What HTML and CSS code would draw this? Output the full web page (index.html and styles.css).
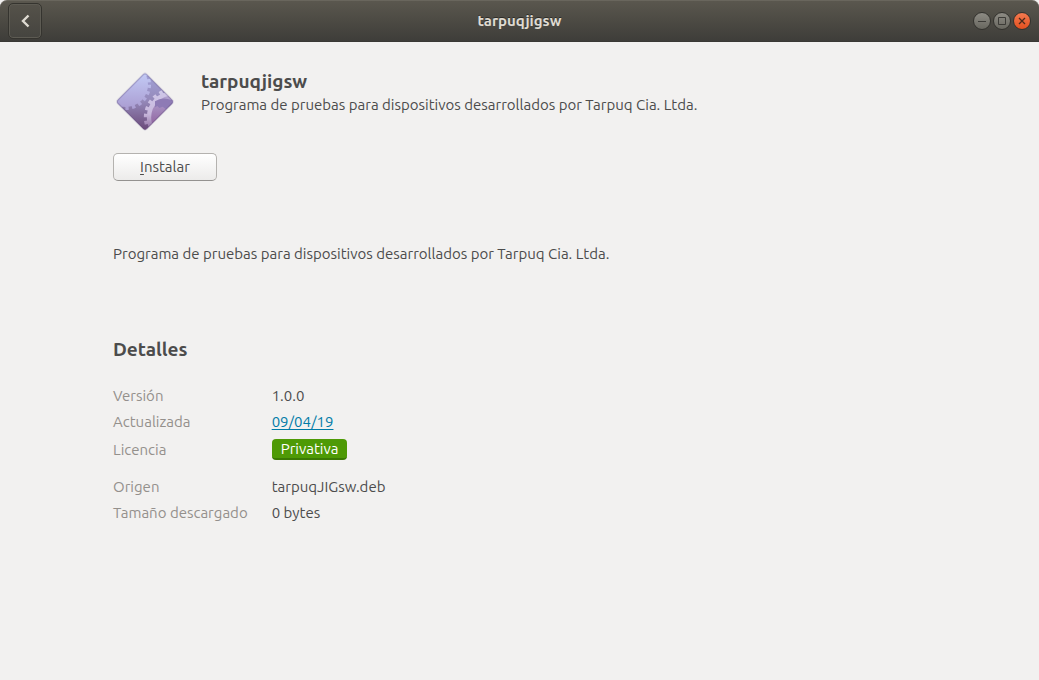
FILE: index.html
```html
<!DOCTYPE html>
<html lang="es">
<head>
<meta charset="utf-8">
<title>tarpuqjigsw</title>
<link rel="stylesheet" href="styles.css">
</head>
<body>
<div class="window">
  <header class="titlebar">
    <button class="back" aria-label="Atrás">
      <svg width="10" height="14" viewBox="0 0 10 14"><path d="M8.500 1.500 3 7l5.500 5.500" fill="none" stroke="#dfdbd2" stroke-width="2.400"/></svg>
    </button>
    <h1 class="title">tarpuqjigsw</h1>
    <div class="controls">
      <button class="control" aria-label="Minimizar"><svg width="16" height="16" viewBox="0 0 16 16"><path d="M4 8.500h8" stroke="#3c3b37"/></svg></button>
      <button class="control" aria-label="Maximizar"><svg width="16" height="16" viewBox="0 0 16 16"><path d="M4.500 4.500h7v7h-7z" fill="none" stroke="#3c3b37"/></svg></button>
      <button class="control close" aria-label="Cerrar"><svg width="16" height="16" viewBox="0 0 16 16"><path d="m5 5 6 6m0-6-6 6" stroke="#4a2a1c" stroke-width="1.300"/></svg></button>
    </div>
  </header>
  <main class="content">
    <section class="app">
      <svg class="app-icon" width="64" height="64" viewBox="24 21 192 192" aria-hidden="true">
        <defs>
          <linearGradient id="back" x1="0" y1="0" x2="0" y2="1"><stop offset="0" stop-color="#a3a5dc"/><stop offset=".5" stop-color="#9488b8"/><stop offset="1" stop-color="#694777"/></linearGradient>
          <linearGradient id="gear" gradientUnits="userSpaceOnUse" x1="0" y1="32" x2="0" y2="145"><stop offset="0" stop-color="#c3cbf6"/><stop offset="1" stop-color="#a99bd0"/></linearGradient>
          <linearGradient id="ring" gradientUnits="userSpaceOnUse" x1="0" y1="80" x2="0" y2="205"><stop offset="0" stop-color="#d0c9ea"/><stop offset=".6" stop-color="#c8b8dc"/><stop offset="1" stop-color="#8c6a9d"/></linearGradient>
          <linearGradient id="inner" gradientUnits="userSpaceOnUse" x1="0" y1="110" x2="0" y2="200"><stop offset="0" stop-color="#b0a0ce"/><stop offset="1" stop-color="#8c5c99"/></linearGradient>
          <clipPath id="diamond"><path d="M115 37q5-5 10 0l76 76q6 6 0 12l-76 76q-5 5-10 0l-76-76q-6-6 0-12z"/></clipPath>
        </defs>
        <path d="M115 37q5-5 10 0l76 76q6 6 0 12l-76 76q-5 5-10 0l-76-76q-6-6 0-12z" fill="#fff" stroke="#d5d2dc" stroke-width="5"/>
        <g clip-path="url(#diamond)">
          <path d="M30 28h180v180H30z" fill="url(#back)"/>
          <circle cx="62" cy="68" r="67" fill="url(#gear)"/>
          <circle cx="62" cy="68" r="70" fill="none" stroke="url(#gear)" stroke-width="12" stroke-dasharray="10 10"/>
          <circle cx="204" cy="166" r="72" fill="url(#inner)" stroke="url(#ring)" stroke-width="13"/>
          <circle cx="204" cy="166" r="82" fill="none" stroke="url(#ring)" stroke-width="11" stroke-dasharray="10.467 11"/>
          <path d="M150 118q18-12 38-7l14 4v15l-14 6-5 6-10-8-10 4-6-6-7 4z" fill="#8e7bb5"/>
          <path d="M115 37q5-5 10 0l76 76q6 6 0 12l-76 76q-5 5-10 0l-76-76q-6-6 0-12z" fill="none" stroke="#594675" stroke-opacity=".3" stroke-width="5"/>
        </g>
      </svg>
      <div class="heading">
        <h2 class="name">tarpuqjigsw</h2>
        <p class="summary">Programa de pruebas para dispositivos desarrollados por Tarpuq Cia. Ltda.</p>
      </div>
    </section>
    <button class="install" accesskey="i"><span class="mnemonic">I</span>nstalar</button>
    <p class="description">Programa de pruebas para dispositivos desarrollados por Tarpuq Cia. Ltda.</p>
    <h2 class="details-title">Detalles</h2>
    <dl class="details">
      <dt>Versión</dt><dd>1.0.0</dd>
      <dt>Actualizada</dt><dd><a class="date" href="#">09/04/19</a></dd>
      <dt class="license-label">Licencia</dt><dd class="license-value"><button class="license">Privativa</button></dd>
      <dt>Origen</dt><dd>tarpuqJIGsw.deb</dd>
      <dt>Tamaño descargado</dt><dd>0 bytes</dd>
    </dl>
  </main>
</div>
</body>
</html>
```
FILE: styles.css
```css
* { box-sizing: border-box; }
html { background: #f2f1f0; }
body, h1, h2, p, dl, dd { margin: 0; }
body {
  color: #4c4c4c;
  font: 15px/20px Ubuntu, "Noto Sans", sans-serif;
}
button { font: inherit; color: inherit; padding: 0; }
.window { min-height: 100vh; }
.titlebar {
  display: grid;
  grid-template-columns: 1fr auto 1fr;
  align-items: center;
  height: 42px;
  padding: 0 8px;
  border-top: 1px solid #69665d;
  border-bottom: 1px solid #3a3935;
  border-radius: 7px 7px 0 0;
  background: linear-gradient(#5a574e, #3e3d39);
  color: #dfdbd2;
}
.back {
  display: flex;
  align-items: center;
  justify-content: center;
  width: 34px;
  height: 36px;
  border: 1px solid #35342f;
  border-radius: 5px;
  background: linear-gradient(#55524a, #45443f);
  box-shadow: inset 0 0 0 1px #5d5b53;
}
.title {
  font-size: 15px;
  line-height: 20px;
  font-weight: 700;
  text-shadow: 0 -1px #2d2c28;
}
.controls { display: flex; justify-content: flex-end; gap: 2px; }
.control {
  display: flex;
  align-items: center;
  justify-content: center;
  width: 18px;
  height: 18px;
  border: 1px solid #33322e;
  border-radius: 50%;
  background: linear-gradient(#8d8b84, #68675f);
}
.control svg { flex: none; }
.close { background: linear-gradient(#f47a50, #e2501f); }
.content { padding: 27px 113px; }
.app { display: flex; gap: 24px; }
.name, .details-title { font-size: 19px; line-height: 24px; font-weight: 700; }
.summary { margin-top: 2px; }
.install {
  display: block;
  width: 104px;
  height: 28px;
  margin-top: 20px;
  border: 1px solid #b4b2af;
  border-bottom-color: #949290;
  border-radius: 5px;
  background: linear-gradient(#fff, #ecebea);
}
.mnemonic { text-decoration: underline; text-underline-offset: 2px; }
.description { margin-top: 63px; }
.details-title { margin-top: 73px; }
.details {
  display: grid;
  grid-template-columns: max-content 1fr;
  column-gap: 24px;
  row-gap: 6px;
  margin-top: 25px;
}
.details dt { color: #94908c; }
.license-label { padding-top: 2px; }
.license-value { padding: 1px 0 11px; }
.date { color: #007ba7; text-underline-offset: 2px; }
.license {
  display: block;
  height: 21px;
  padding: 0 9px;
  border: 0;
  border-bottom: 2px solid #3b7a04;
  border-radius: 4px;
  background: #4e9a06;
  color: #fff;
  line-height: 19px;
}
```
